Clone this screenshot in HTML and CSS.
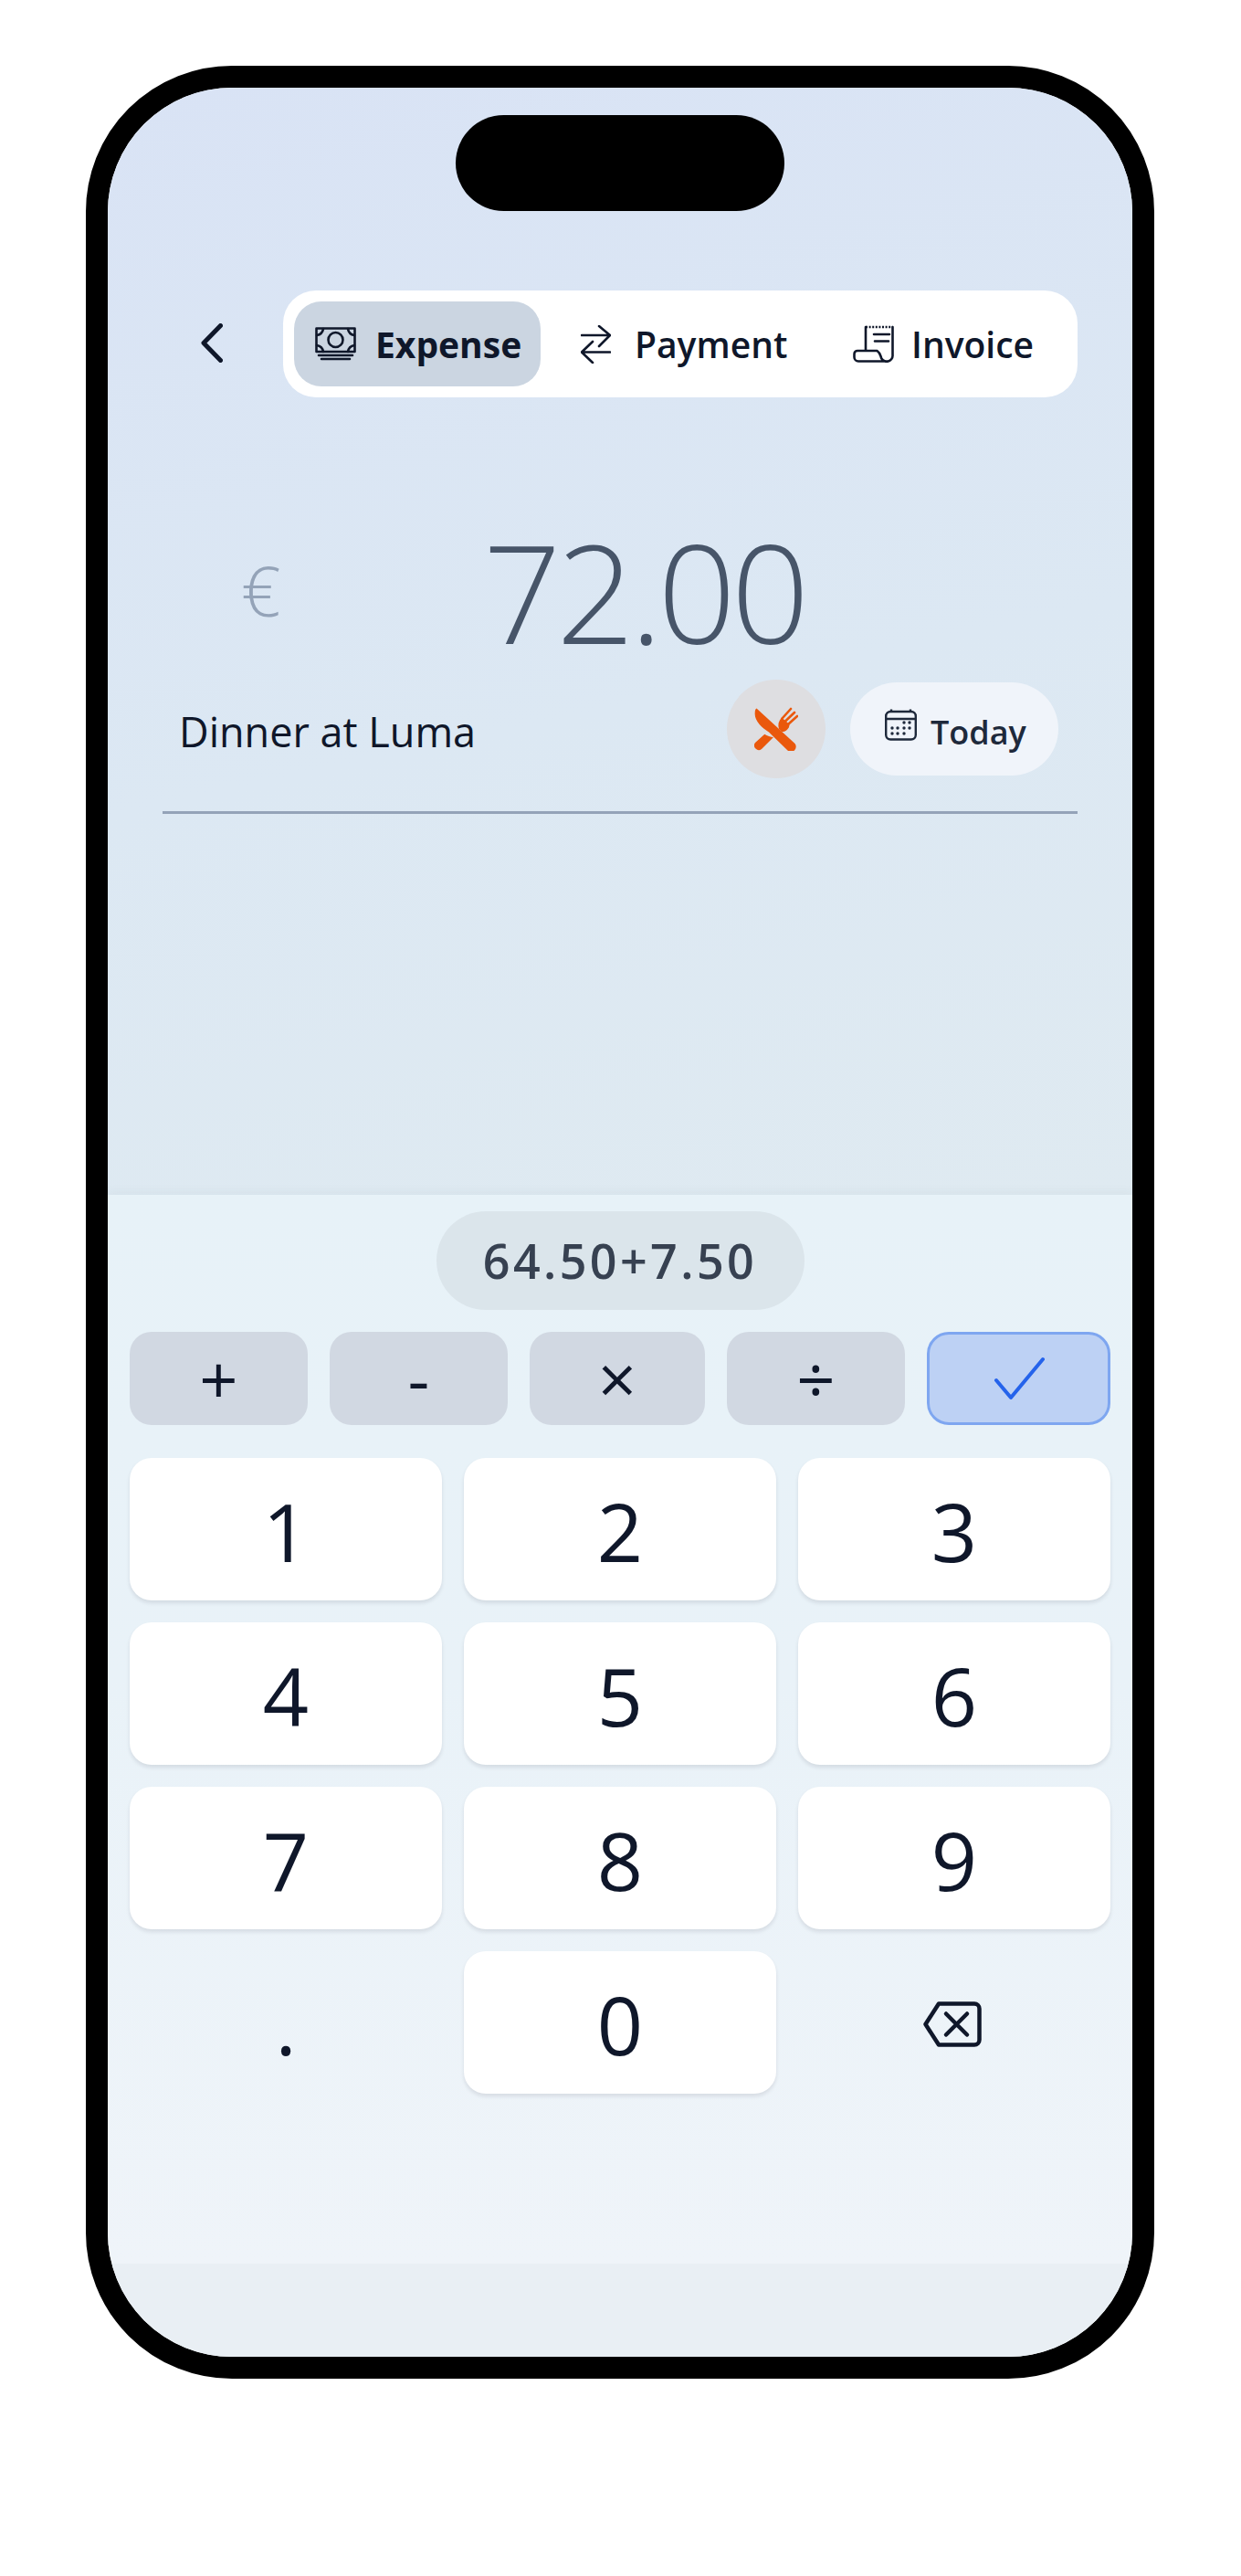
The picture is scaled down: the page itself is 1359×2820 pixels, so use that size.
FILE: index.html
```html
<!DOCTYPE html>
<html lang="en">
<head>
<meta charset="UTF-8">
<meta name="viewport" content="width=device-width, initial-scale=1.0">
<title>New Expense</title>
<link rel="stylesheet" href="styles.css">
</head>
<body>
<div class="phone">
  <div class="island"></div>
  <div class="screen">
    <div class="top-area">
      <div class="header">
        <button class="back">
          <svg class="icon" width="24" height="43" viewBox="0 0 24 43"><path d="M21.5 2.5 L3 21.5 L21.5 40.5"/></svg>
        </button>
        <div class="tabs">
          <div class="tab tab-expense active">
            <svg class="icon icon-thin" width="45" height="37" viewBox="0 0 45 37">
              <rect x="1.5" y="1.5" width="42" height="25.5"/>
              <circle cx="22.5" cy="14" r="8"/>
              <path d="M2 9 Q8 8 9 2 M43 9 Q37 8 36 2 M2 20 Q8 21 9 27 M43 20 Q37 21 36 27"/>
              <path d="M4 31 H41 M7 35 H38"/>
            </svg>
            <span>Expense</span>
          </div>
          <div class="tab tab-payment">
            <svg class="icon icon-thin" width="33" height="42" viewBox="0 0 33 42">
              <path d="M1 11 H32 M20 1 L32 11 L20 23"/>
              <path d="M32 29.5 H1 M13 18 L1 29.5 L13 41"/>
            </svg>
            <span>Payment</span>
          </div>
          <div class="tab tab-invoice">
            <svg class="icon icon-thin" width="45" height="41" viewBox="0 0 45 41">
              <path d="M14 27 V2 M43.5 2 V32.5 A6.5 6.5 0 0 1 30.5 34 C29.5 31 28 29 26.5 28 H5 A3.5 3.5 0 0 0 1.5 31.5 V35 A4.5 4.5 0 0 0 6 39.5 H37.5"/>
              <path class="zigzag" d="M14 2 H43.5"/>
              <path d="M23 10 H40 M24 17.5 H39"/>
            </svg>
            <span>Invoice</span>
          </div>
        </div>
      </div>

      <div class="amount-row">
        <span class="currency">€</span>
        <span class="amount">72.00</span>
      </div>

      <div class="note-row">
        <span class="note">Dinner at Luma</span>
        <div class="category">
          <svg width="48" height="48" viewBox="0 0 48 48" fill="#ea580c">
            <path d="M2.5 1.5 L44.5 40 A5.5 5.5 0 0 1 36.5 47.5 L16 27.5 C8 22.5 0 15 .7 6.5 C.7 3.5 1.5 2 2.5 1.5Z"/>
            <path d="M11.3 29.7 C14 31.5 18 33 21 33 L8 46 A5 5 0 0 1 1 39 Z"/>
            <path d="M30 11.5 C26.5 15.5 25.5 19.5 27 24 L30 27 C34 27.5 38.5 24 38.5 19 Z"/>
            <path class="tines" d="M30.5 12.5 L40 2 M34 15.5 L44 6 M37 19 L47 10"/>
          </svg>
        </div>
        <div class="date-pill">
          <svg class="calendar" width="35" height="35" viewBox="0 0 35 35">
            <rect x="1.2" y="3" width="32.6" height="30.5" rx="5"/>
            <path d="M1.2 11 H33.8 M7 .5 V3 M28 .5 V3"/>
            <g class="cal-dots">
              <circle cx="21" cy="15" r="1.7"/><circle cx="27" cy="15" r="1.7"/>
              <circle cx="8" cy="21" r="1.7"/><circle cx="14" cy="21" r="1.7"/><circle cx="21" cy="21" r="1.7"/><circle cx="27" cy="21" r="1.7"/>
              <circle cx="8" cy="27" r="1.7"/><circle cx="14" cy="27" r="1.7"/><circle cx="21" cy="27" r="1.7"/>
            </g>
          </svg>
          <span>Today</span>
        </div>
      </div>
    </div>

    <div class="keypad">
      <div class="expression">64.50+7.50</div>
      <div class="ops">
        <button class="op">+</button>
        <button class="op">-</button>
        <button class="op">×</button>
        <button class="op">÷</button>
        <button class="op confirm">
          <svg width="58" height="48" viewBox="0 0 58 48"><path d="M4 26 L20 45 L55 3"/></svg>
        </button>
      </div>
      <div class="numbers">
        <button class="num">1</button>
        <button class="num">2</button>
        <button class="num">3</button>
        <button class="num">4</button>
        <button class="num">5</button>
        <button class="num">6</button>
        <button class="num">7</button>
        <button class="num">8</button>
        <button class="num">9</button>
        <button class="num plain">.</button>
        <button class="num">0</button>
        <button class="num plain">
          <svg class="backspace" width="64" height="50" viewBox="0 0 64 50">
            <path d="M17 2.5 H56 A5.5 5.5 0 0 1 61.5 8 V42 A5.5 5.5 0 0 1 56 47.5 H17 L2.5 25 Z"/>
            <path d="M25 13.5 L48 36.5 M48 13.5 L25 36.5"/>
          </svg>
        </button>
      </div>
    </div>
    <div class="home-bar"></div>
  </div>
</div>
</body>
</html>
```

FILE: styles.css
```css
* {
  box-sizing: border-box;
}
body {
  margin: 0;
  background-color: #fff;
  font-family: "Open Sans", "Noto Sans", sans-serif;
  color: #0f172a;
}
button {
  font-family: inherit;
  border: none;
  padding: 0;
  color: inherit;
  background: none;
}
svg {
  display: block;
}
.phone {
  position: relative;
  width: 1170px;
  height: 2532px;
  margin: 72px 0 0 94px;
  border: 24px solid #000;
  border-radius: 160px;
  overflow: hidden;
}
.island {
  position: absolute;
  top: 30px;
  left: 381px;
  width: 360px;
  height: 105px;
  border-radius: 53px;
  background-color: #000;
}
.screen {
  display: flex;
  flex-direction: column;
  height: 100%;
}
.top-area {
  flex: 1;
  padding-top: 222px;
  background: linear-gradient(168deg, #d9e3f5 0%, #dce8f3 55%, #dfeaf1 100%);
}
.header {
  display: flex;
  align-items: center;
  justify-content: space-between;
  padding: 0 60px 0 90px;
}
.back {
  width: 48px;
  display: flex;
  justify-content: center;
  margin-top: -2px;
}
.icon {
  flex: none;
  fill: none;
  stroke: #0f172a;
  stroke-width: 5;
  stroke-linecap: round;
  stroke-linejoin: round;
}
.icon-thin {
  stroke-width: 2.6;
}
.zigzag {
  stroke-dasharray: 2 1.6;
  stroke-linecap: butt;
  stroke-width: 2.4;
}
.tabs {
  display: flex;
  width: 870px;
  height: 117px;
  padding: 12px;
  border-radius: 36px;
  background-color: #fff;
}
.tab {
  display: flex;
  align-items: center;
  gap: 21px;
  flex: none;
  padding: 0 23px;
  border-radius: 30px;
  font-size: 39px;
  font-weight: 600;
  white-space: nowrap;
}
.tab-expense {
  width: 270px;
}
.tab-payment {
  width: 271px;
  margin-left: 21px;
  gap: 26px;
}
.tab-invoice {
  width: 248px;
  margin-left: 27px;
  gap: 19px;
}
.active {
  background-color: #cbd5e1;
  font-weight: 700;
}
.amount-row {
  display: flex;
  align-items: center;
  height: 170px;
  margin-top: 130px;
  padding: 0 154px 0 146px;
}
.currency {
  width: 60px;
  margin-top: -10px;
  font-size: 76px;
  font-weight: 300;
  color: #94a3b8;
}
.amount {
  flex: 1;
  margin-top: -6px;
  text-align: center;
  font-size: 150px;
  font-weight: 300;
  letter-spacing: -5.2px;
  line-height: 170px;
  color: #475569;
}
.note-row {
  display: flex;
  align-items: center;
  gap: 27px;
  margin: 9px 60px 0;
  padding: 0 21px 36px 18px;
  border-bottom: 3px solid #94a3b8;
}
.note {
  flex: 1;
  padding-top: 4px;
  font-size: 45px;
  font-weight: 400;
}
.category {
  display: flex;
  align-items: center;
  justify-content: center;
  width: 108px;
  height: 108px;
  border-radius: 50%;
  background-color: #dedee1;
}
.tines {
  fill: none;
  stroke: #ea580c;
  stroke-width: 2.6;
  stroke-linecap: round;
}
.date-pill {
  display: flex;
  align-items: center;
  gap: 15px;
  width: 228px;
  height: 102px;
  padding-left: 38px;
  border-radius: 51px;
  background-color: #f0f4fa;
  font-size: 36px;
  font-weight: 600;
  color: #1e293b;
}
.date-pill span {
  padding-top: 6px;
}
.calendar {
  margin-top: -10px;
  fill: none;
  stroke: #1e293b;
  stroke-width: 2.4;
}
.cal-dots {
  fill: #1e293b;
  stroke: none;
}
.keypad {
  display: flex;
  flex-direction: column;
  height: 1170px;
  padding: 18px 24px 0;
  background: linear-gradient(180deg, #e7f2f8 0%, #e9f2f8 45%, #eff4f9 100%);
  box-shadow: 0 -4px 10px rgba(51, 65, 85, 0.04);
}
.expression {
  align-self: center;
  width: 403px;
  height: 108px;
  border-radius: 54px;
  background-color: #dbe5eb;
  text-align: center;
  line-height: 108px;
  font-size: 52px;
  font-weight: 600;
  letter-spacing: 3.4px;
  color: #374151;
}
.ops {
  display: grid;
  grid-template-columns: 195px 195px 192px 195px 1fr;
  gap: 24px;
  margin-top: 24px;
}
.op {
  display: flex;
  align-items: center;
  justify-content: center;
  height: 102px;
  border-radius: 24px;
  background-color: #d1d8e2;
  font-size: 74px;
  line-height: 1;
}
.confirm {
  background-color: #bdd1f4;
  border: 3px solid #7ea6f0;
}
.confirm svg {
  fill: none;
  stroke: #2563eb;
  stroke-width: 4;
  stroke-linecap: round;
  stroke-linejoin: round;
}
.numbers {
  display: grid;
  grid-template-columns: repeat(3, 1fr);
  grid-auto-rows: 156px;
  gap: 24px;
  margin-top: 36px;
}
.num {
  display: flex;
  align-items: center;
  justify-content: center;
  padding-top: 3px;
  border-radius: 24px;
  background-color: #fff;
  box-shadow: 0 3px 4px rgba(15, 23, 42, 0.1);
  font-size: 88px;
  line-height: 1;
}
.plain {
  background: none;
  box-shadow: none;
}
.backspace {
  margin-right: 5px;
  fill: none;
  stroke: #0f172a;
  stroke-width: 4.5;
  stroke-linecap: round;
  stroke-linejoin: round;
}
.home-bar {
  flex: none;
  height: 102px;
  background-color: #e9eff4;
}
```
